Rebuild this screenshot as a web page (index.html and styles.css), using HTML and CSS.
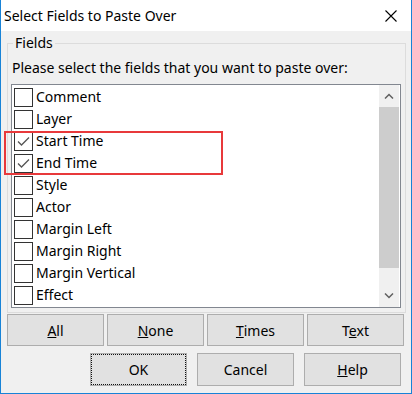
FILE: index.html
```html
<!doctype html>
<html lang="en">
<head>
	<meta charset="UTF-8">
	<title>Select Fields to Paste Over</title>
	<link rel="stylesheet" href="styles.css">
</head>
<body>
<div class="window">
	<div class="titlebar">
		<span class="title">Select Fields to Paste Over</span>
		<svg class="close" width="12" height="12" viewBox="0 0 12 12"><path d="M0.5 0.5L11.5 11.5M11.5 0.5L0.5 11.5" stroke="#000" stroke-width="1.1" fill="none"/></svg>
	</div>
	<div class="content">
		<fieldset class="group">
			<legend>Fields</legend>
			<p class="hint">Please select the fields that you want to paste over:</p>
			<div class="list">
				<ul class="items">
					<li><span class="box"></span>Comment</li>
					<li><span class="box"></span>Layer</li>
					<li><span class="box checked"><svg width="17" height="17" viewBox="0 0 17 17"><path d="M3 8.5L6.5 12L14 4.5" stroke="#555" stroke-width="1.3" fill="none"/></svg></span>Start Time</li>
					<li><span class="box checked"><svg width="17" height="17" viewBox="0 0 17 17"><path d="M3 8.5L6.5 12L14 4.5" stroke="#555" stroke-width="1.3" fill="none"/></svg></span>End Time</li>
					<li><span class="box"></span>Style</li>
					<li><span class="box"></span>Actor</li>
					<li><span class="box"></span>Margin Left</li>
					<li><span class="box"></span>Margin Right</li>
					<li><span class="box"></span>Margin Vertical</li>
					<li><span class="box"></span>Effect</li>
				</ul>
				<div class="scroll">
					<div class="arrow"><svg width="10" height="6" viewBox="0 0 10 6"><path d="M1 5.5L5 1.5L9 5.5" stroke="#606060" stroke-width="1.5" fill="none"/></svg></div>
					<div class="thumb"></div>
					<div class="track"></div>
					<div class="arrow"><svg width="10" height="6" viewBox="0 0 10 6"><path d="M1 0.5L5 4.5L9 0.5" stroke="#606060" stroke-width="1.5" fill="none"/></svg></div>
				</div>
			</div>
		</fieldset>
		<div class="pick-row">
			<button class="btn"><u>A</u>ll</button>
			<button class="btn"><u>N</u>one</button>
			<button class="btn"><u>T</u>imes</button>
			<button class="btn">T<u>e</u>xt</button>
		</div>
		<div class="action-row">
			<button class="btn default">OK</button>
			<button class="btn">Cancel</button>
			<button class="btn"><u>H</u>elp</button>
		</div>
	</div>
	<div class="mark"></div>
</div>
</body>
</html>
```
FILE: styles.css
```css
body,ul,p{margin:0;padding:0;}
body{background:#fff;}
.window{
	position:relative;
	width:410px;
	height:393px;
	border:1px solid #1883d7;
	border-top:none;
	background:#f0f0f0;
	font-family:"Noto Sans","Open Sans",sans-serif;
	font-size:14px;
	color:#000;
	display:flex;
	flex-direction:column;
}
.titlebar{
	height:31px;
	background:#fff;
	display:flex;
	align-items:center;
	justify-content:space-between;
	padding:0 14px 0 3px;
}
.title{line-height:20px;}
.close{display:block;}

.content{
	display:flex;
	flex-direction:column;
}
.group{
	margin:2px 5px 0 6px;
	padding:0 4px 4px 3px;
	border:1px solid #dcdcdc;
	min-width:0;
}
.group legend{
	margin-left:2px;
	padding:0 2px;
	line-height:20px;
}
.hint{
	margin:5px 0 6px 1px;
	line-height:20px;
}
.list{
	display:flex;
	height:222px;
	border:1px solid #828790;
	background:#fff;
	padding:0 1px 0 0;
}
.items{
	flex:1;
	list-style:none;
	padding-top:1px;
}
.items li{
	height:22px;
	display:flex;
	align-items:center;
	padding-left:2px;
	line-height:20px;
}
.box{
	width:17px;
	height:17px;
	border:1px solid #333;
	margin-right:3px;
	flex:none;
}
.box svg{display:block;}

.scroll{
	width:20px;
	background:#f0f0f0;
	display:flex;
	flex-direction:column;
}
.arrow{
	height:22px;
	display:flex;
	align-items:center;
	justify-content:center;
}
.arrow svg{display:block;}
.thumb{
	height:161px;
	background:#cdcdcd;
}
.track{flex:1;}

.pick-row{
	display:grid;
	grid-template-columns:repeat(4,97px);
	gap:3px;
	margin:1px 0 0 6px;
}
.action-row{
	display:flex;
	justify-content:flex-end;
	gap:10px;
	margin:7px 10px 0 0;
}
.btn{
	width:97px;
	height:32px;
	border:1px solid #adadad;
	background:#e1e1e1;
	font-family:inherit;
	font-size:14px;
	color:#000;
	padding:0;
}
.action-row .btn{height:33px;}
.btn.default{
	outline:1px dotted #111;
	outline-offset:-2px;
}

.mark{
	position:absolute;
	left:3px;
	top:131px;
	width:215px;
	height:40px;
	border:2px solid #e8393b;
}
```
